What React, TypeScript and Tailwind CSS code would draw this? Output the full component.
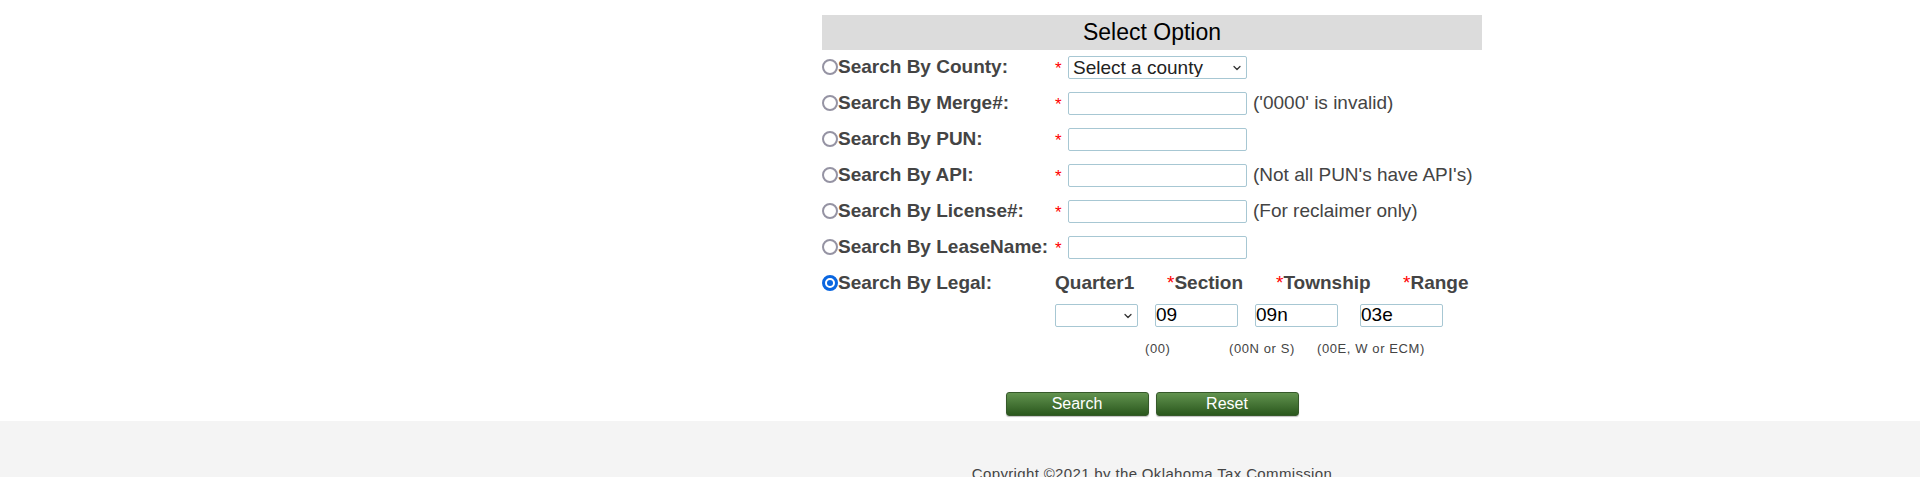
import { ChevronDown } from "lucide-react";

const rows = [
	{ label: "Search By County:", kind: "select" as const },
	{ label: "Search By Merge#:", hint: "('0000' is invalid)" },
	{ label: "Search By PUN:" },
	{ label: "Search By API:", hint: "(Not all PUN's have API's)" },
	{ label: "Search By License#:", hint: "(For reclaimer only)" },
	{ label: "Search By LeaseName:" },
];

function Radio({ checked = false }: { checked?: boolean }) {
	if (checked) {
		return (
			<span className="w-[16px] h-[16px] shrink-0 rounded-full border-[3px] border-[#0a66e0] bg-white flex items-center justify-center">
				<span className="w-[6px] h-[6px] rounded-full bg-[#0a66e0]" />
			</span>
		);
	}
	return (
		<span className="w-[16px] h-[16px] shrink-0 rounded-full border-2 border-[#9593a3] bg-white" />
	);
}

function Star() {
	return <span className="text-[#ff0000] font-normal">*</span>;
}

export default function App() {
	return (
		<div className="min-h-screen bg-white font-['Liberation_Sans',Arial,sans-serif]">
			<div className="flex">
				{/* empty side column */}
				<aside className="w-[384px] shrink-0" />

				<main className="flex-1 pt-[15px] pb-[5px]">
					<div className="w-[660px] mx-auto">
						{/* Title bar */}
						<div className="h-[35px] bg-[#dcdcdc] flex items-center justify-center text-[23px] text-black">
							Select Option
						</div>

						{/* Search options */}
						<div className="-mt-[1px]">
							{rows.map((row) => (
								<div key={row.label} className="h-[36px] flex items-center">
									<label className="w-[233px] flex items-center text-[19px] font-bold text-[#444]">
										<Radio />
										<span>{row.label}</span>
									</label>
									<span className="w-[13px] text-[17px] text-[#ff0000] self-start pt-[11px] leading-none">*</span>
									{row.kind === "select" ? (
										<div className="relative w-[179px] h-[23px]">
											<select className="appearance-none w-full h-full border border-[#a7c7d3] rounded-[2px] pl-[4px] text-[19px] leading-none text-[#222] bg-white">
												<option>Select a county</option>
											</select>
											<ChevronDown
												className="absolute right-[4px] top-[6px] w-[12px] h-[12px] text-[#333] pointer-events-none"
												strokeWidth={2.5}
											/>
										</div>
									) : (
										<input
											type="text"
											className="w-[179px] h-[23px] border border-[#a7c7d3] rounded-[2px] px-[2px] text-[19px] bg-white"
										/>
									)}
									{row.hint && (
										<span className="ml-[6px] text-[19px] text-[#444]">{row.hint}</span>
									)}
								</div>
							))}

							{/* Legal */}
							<div className="h-[36px] flex items-center text-[19px] font-bold text-[#444]">
								<label className="w-[233px] flex items-center">
									<Radio checked />
									<span>Search By Legal:</span>
								</label>
								<span className="w-[112px]">Quarter1</span>
								<span className="w-[109px]">
									<Star />
									Section
								</span>
								<span className="w-[127px]">
									<Star />
									Township
								</span>
								<span>
									<Star />
									Range
								</span>
							</div>
						</div>

						<div className="mt-[3px] pl-[233px] flex items-center h-[23px]">
							<div className="relative w-[83px] h-[23px]">
								<select className="appearance-none w-full h-full border border-[#a7c7d3] rounded-[2px] bg-white text-[19px]">
									<option></option>
								</select>
								<ChevronDown
									className="absolute right-[4px] top-[6px] w-[12px] h-[12px] text-[#333] pointer-events-none"
									strokeWidth={2.5}
								/>
							</div>
							<input
								type="text"
								defaultValue="09"
								className="ml-[17px] w-[83px] h-[23px] border border-[#a7c7d3] rounded-[2px] px-0 text-[19px] text-black bg-white"
							/>
							<input
								type="text"
								defaultValue="09n"
								className="ml-[17px] w-[83px] h-[23px] border border-[#a7c7d3] rounded-[2px] px-0 text-[19px] text-black bg-white"
							/>
							<input
								type="text"
								defaultValue="03e"
								className="ml-[22px] w-[83px] h-[23px] border border-[#a7c7d3] rounded-[2px] px-0 text-[19px] text-black bg-white"
							/>
						</div>

						<div className="mt-[14px] pl-[323px] flex h-[16px] items-center text-[13px] tracking-[0.6px] text-[#444]">
							<span className="w-[84px]">(00)</span>
							<span className="w-[88px]">(00N or S)</span>
							<span>(00E, W or ECM)</span>
						</div>

						{/* Actions */}
						<div className="mt-[35px] flex justify-center gap-[7px]">
							<button
								type="button"
								className="w-[143px] h-[24px] rounded-[3px] border border-[#36592a] bg-gradient-to-b from-[#62934f] to-[#2a581d] text-white text-[16px] leading-none shadow-[0_1px_1px_rgba(0,0,0,0.25)]"
							>
								Search
							</button>
							<button
								type="button"
								className="w-[143px] h-[24px] rounded-[3px] border border-[#36592a] bg-gradient-to-b from-[#62934f] to-[#2a581d] text-white text-[16px] leading-none shadow-[0_1px_1px_rgba(0,0,0,0.25)]"
							>
								Reset
							</button>
						</div>
					</div>
				</main>
			</div>

			{/* Footer */}
			<footer className="bg-[#f4f4f4] flex">
				<aside className="w-[384px] shrink-0" />
				<div className="flex-1 pt-[44px] pb-[24px] text-center text-[15px] tracking-[0.35px] leading-[18px] text-[#444]">
					Copyright ©2021 by the Oklahoma Tax Commission
				</div>
			</footer>
		</div>
	);
}
